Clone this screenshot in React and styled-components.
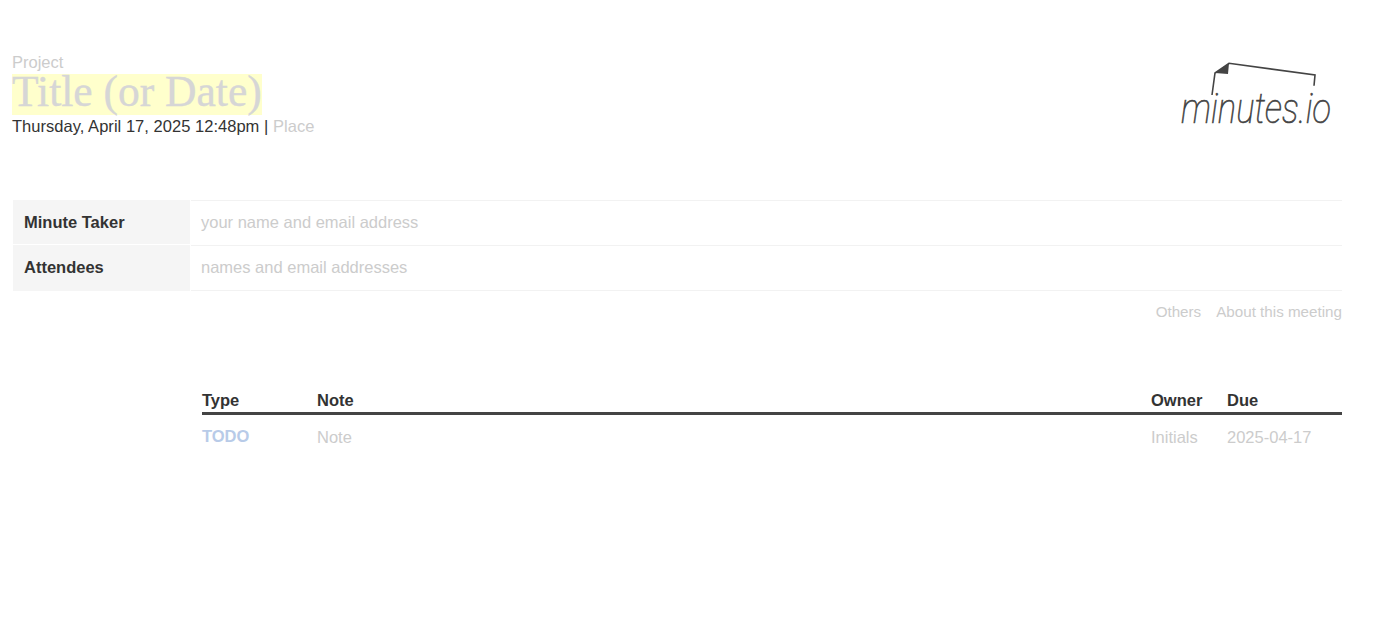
import React from 'react';
import styled, { createGlobalStyle } from 'styled-components';

const GlobalStyle = createGlobalStyle`
  html, body {
    margin: 0;
    padding: 0;
    background: #fff;
    font-family: "Liberation Sans", Arial, sans-serif;
    font-size: 16.5px;
    color: #333;
  }
`

const Page = styled.div`
  width: 1400px;
  height: 618px;
  overflow: hidden;
  box-sizing: border-box;
  padding: 53px 58px 0 12px;
`
const Header = styled.header`
  display: flex;
  justify-content: space-between;
  align-items: flex-start;
  height: 147px;
`
const Project = styled.div`
  line-height: 18px;
  color: #ccc;
`
const Title = styled.h1`
  display: inline-block;
  margin: 3px 0 0;
  height: 41px;
  font-family: "Liberation Serif", serif;
  font-size: 43.5px;
  font-weight: 400;
  line-height: 35px;
  color: #d6d6d6;
  -webkit-text-stroke: 0.4px #d6d6d6;
  background: #ffffcc;
`
const Meta = styled.div`
  margin-top: 2px;
  line-height: 18px;
  letter-spacing: 0.03px;
  color: #333;
`
const Place = styled.span`
  color: #ccc;
`
const LogoWrap = styled.div`
  margin: 8px 10px 0 0;
  width: 152px;
  height: 68px;
`
const LogoSvg = styled.svg`
  display: block;
  overflow: visible;
`
const Details = styled.section`
  margin-left: 1px;
`
const DetailRow = styled.div`
  display: grid;
  grid-template-columns: 177px 1fr;
  column-gap: 1px;
  height: 45px;
`
const Label = styled.div`
  display: flex;
  align-items: center;
  padding: 0 0 ${p => (p.$first ? '0' : '2px')} 11px;
  font-weight: 700;
  background: #f5f5f5;
  color: #333;
  ${p => p.$first && 'border-bottom: 1px solid #fff;'}
`
const Value = styled.div`
  display: flex;
  align-items: center;
  padding: 0 0 2px 10px;
  color: #ccc;
  border-top: 1px solid #f2f2f2;
  box-sizing: border-box;
  ${p => p.$last && 'border-bottom: 1px solid #f2f2f2; height: 46px;'}
`
const Links = styled.nav`
  display: flex;
  justify-content: flex-end;
  gap: 15px;
  margin-top: 13px;
  font-size: 15.2px;
  line-height: 18px;
  color: #ccc;
`
const Notes = styled.section`
  margin: 70px 0 0 190px;
`
const NotesRow = styled.div`
  display: grid;
  grid-template-columns: 115px 1fr 76px 115px;
  line-height: 18px;
`
const NotesHead = styled(NotesRow)`
  font-weight: 700;
  color: #333;
  padding-bottom: 3px;
  border-bottom: 3px solid #444;
`
const NotesBody = styled(NotesRow)`
  margin-top: 13px;
  color: #ccc;
`
const Type = styled.div`
  font-weight: 700;
  color: #b8cbe8;
  margin-top: -1px;
`

const Logo = () => (
  <LogoSvg width="152" height="68" viewBox="0 0 152 68">
    <path d="M32 34 L35 12 L49 2.300 L135 14 L134 24.700" fill="none" stroke="#444" strokeWidth="1.600" />
    <path d="M35 12 L49 2.300 L48 13 Z" fill="#444" />
    <text
      x="1"
      y="62"
      fontFamily="Roboto, sans-serif"
      fontSize="43"
      fontWeight="100"
      fontStyle="italic"
      fill="#444"
      stroke="#444"
      strokeWidth="0.700"
      textLength="150"
      lengthAdjust="spacingAndGlyphs"
    >
      minutes.io
    </text>
  </LogoSvg>
)

export default function App() {
  return (
    <>
      <GlobalStyle />
      <Page>
        <Header>
          <div>
            <Project>Project</Project>
            <Title>Title (or Date)</Title>
            <Meta>
              Thursday, April 17, 2025 12:48pm | <Place>Place</Place>
            </Meta>
          </div>
          <LogoWrap>
            <Logo />
          </LogoWrap>
        </Header>
        <Details>
          <DetailRow>
            <Label $first>Minute Taker</Label>
            <Value>your name and email address</Value>
          </DetailRow>
          <DetailRow>
            <Label>Attendees</Label>
            <Value $last>names and email addresses</Value>
          </DetailRow>
        </Details>
        <Links>
          <span>Others</span>
          <span>About this meeting</span>
        </Links>
        <Notes>
          <NotesHead>
            <div>Type</div>
            <div>Note</div>
            <div>Owner</div>
            <div>Due</div>
          </NotesHead>
          <NotesBody>
            <Type>TODO</Type>
            <div>Note</div>
            <div>Initials</div>
            <div>2025-04-17</div>
          </NotesBody>
        </Notes>
      </Page>
    </>
  )
}
